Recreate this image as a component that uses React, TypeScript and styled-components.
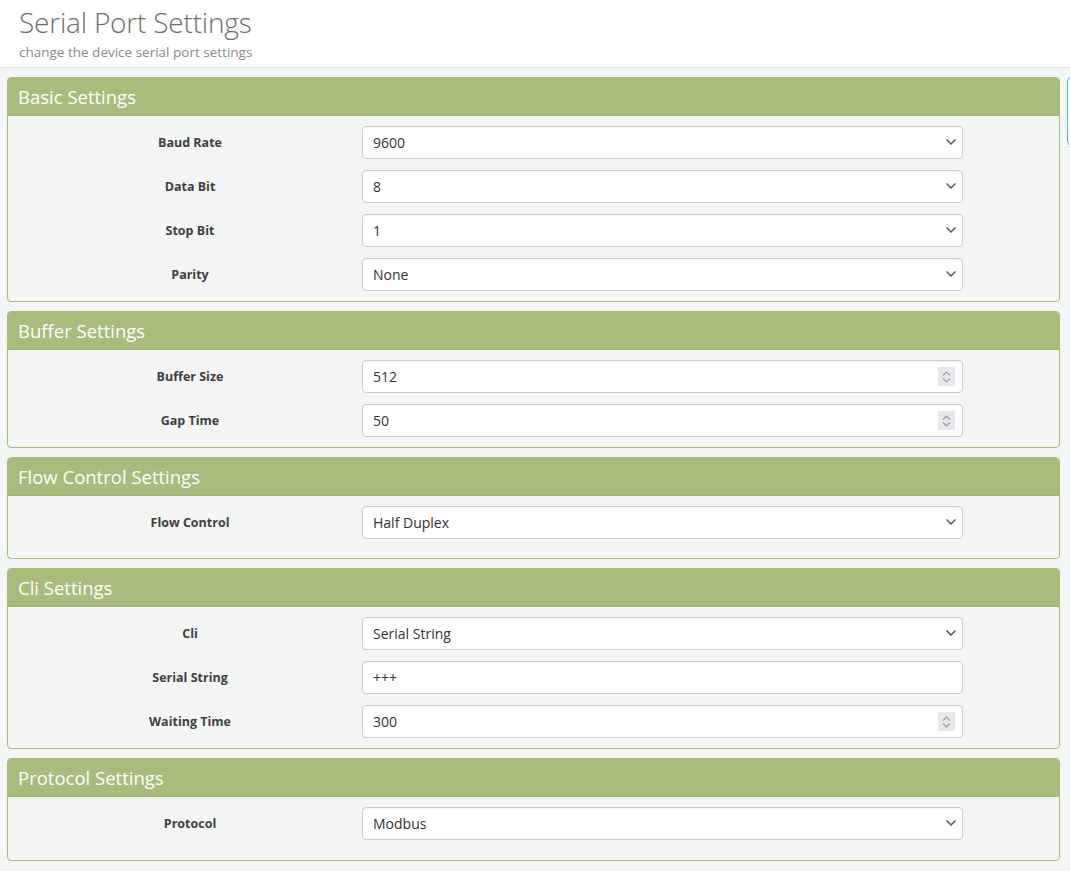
import React from "react";
import styled, { createGlobalStyle } from "styled-components";

const Global = createGlobalStyle`
  html, body { margin: 0; padding: 0; background: #f4f5f5; }
  body { font-family: "Open Sans", "Segoe UI", Arial, sans-serif; color: #333; }
  * { box-sizing: border-box; }
`;

const Page = styled.div`
  position: relative;
  width: 1070px;
  min-height: 871px;
  background: #f4f5f5;
  overflow: hidden;
`;

const TopBar = styled.header`
  background: #fff;
  height: 68px;
  border-bottom: 1px solid #ebebeb;
  padding: 3px 0 0 19px;
`;

const Title = styled.h1`
  margin: 0;
  font-weight: 300;
  font-size: 28px;
  line-height: 38px;
  color: #6f6f6f;
  letter-spacing: -0.2px;
`;

const Subtitle = styled.div`
  font-size: 13.5px;
  font-weight: 400;
  color: #8a8a8a;
  line-height: 18px;
  margin-top: 2px;
`;

const Content = styled.main`
  display: flex;
  flex-direction: column;
  gap: 9px;
  padding: 9px 10px 10px 7px;
`;

const Panel = styled.section`
  border: 1px solid #a8bc7a;
  border-radius: 4px;
  background: #f4f5f5;
  overflow: hidden;
`;

const PanelHeader = styled.div`
  background: #a8bc7b;
  height: 38px;
  border-bottom: 1px solid #9fb472;
  color: #fff;
  font-size: 18.5px;
  line-height: 37px;
  padding-left: 10px;
`;

const PanelBody = styled.div<{ $minH?: number }>`
  display: flex;
  flex-direction: column;
  gap: 11px;
  padding: 10px 0 10px 10px;
  min-height: ${(p) => (p.$minH ? `${p.$minH}px` : "auto")};
`;

const Row = styled.div`
  display: grid;
  grid-template-columns: 344px 601px;
  align-items: center;
  height: 33px;
`;

const Label = styled.label`
  text-align: center;
  font-weight: 700;
  font-size: 12.5px;
  color: #3f3f3f;
`;

const FieldWrap = styled.div`
  position: relative;
  height: 33px;
`;

const Field = styled.div`
  height: 33px;
  background: #fff;
  border: 1px solid #cccccc;
  border-radius: 4px;
  padding-left: 10px;
  font-size: 14px;
  line-height: 31px;
  color: #333;
  box-shadow: inset 0 1px 1px rgba(0, 0, 0, 0.04);
`;

const Chevron = styled.svg`
  position: absolute;
  right: 6px;
  top: 12px;
`;

const Spinner = styled.div`
  position: absolute;
  right: 8px;
  top: 7px;
  width: 17px;
  height: 19px;
  background: #e7e7ec;
  display: flex;
  flex-direction: column;
  align-items: center;
  justify-content: center;
  gap: 2px;
`;

const SideTab = styled.div`
  position: absolute;
  left: 1067px;
  top: 77px;
  width: 20px;
  height: 68px;
  border: 1px solid #5aaed0;
  border-radius: 4px;
  background: #fff;
`;

type Fld = { label: string; value: string; kind: "select" | "number" | "text" };

const Input: React.FC<{ f: Fld }> = ({ f }) => (
  <FieldWrap>
    <Field>{f.value}</Field>
    {f.kind === "select" && (
      <Chevron width="12" height="8" viewBox="0 0 12 8">
        <path d="M1.5 1.5 L6 6 L10.5 1.5" fill="none" stroke="#555" strokeWidth="1.5" />
      </Chevron>
    )}
    {f.kind === "number" && (
      <Spinner>
        <svg width="9" height="5" viewBox="0 0 9 5">
          <path d="M1 4.5 L4.5 1 L8 4.5" fill="none" stroke="#9a9aa5" strokeWidth="1.1" />
        </svg>
        <svg width="9" height="5" viewBox="0 0 9 5">
          <path d="M1 0.5 L4.5 4 L8 0.5" fill="none" stroke="#9a9aa5" strokeWidth="1.1" />
        </svg>
      </Spinner>
    )}
  </FieldWrap>
);

const sections: { title: string; minH?: number; fields: Fld[] }[] = [
  {
    title: "Basic Settings",
    fields: [
      { label: "Baud Rate", value: "9600", kind: "select" },
      { label: "Data Bit", value: "8", kind: "select" },
      { label: "Stop Bit", value: "1", kind: "select" },
      { label: "Parity", value: "None", kind: "select" },
    ],
  },
  {
    title: "Buffer Settings",
    fields: [
      { label: "Buffer Size", value: "512", kind: "number" },
      { label: "Gap Time", value: "50", kind: "number" },
    ],
  },
  {
    title: "Flow Control Settings",
    minH: 62,
    fields: [{ label: "Flow Control", value: "Half Duplex", kind: "select" }],
  },
  {
    title: "Cli Settings",
    fields: [
      { label: "Cli", value: "Serial String", kind: "select" },
      { label: "Serial String", value: "+++", kind: "text" },
      { label: "Waiting Time", value: "300", kind: "number" },
    ],
  },
  {
    title: "Protocol Settings",
    minH: 63,
    fields: [{ label: "Protocol", value: "Modbus", kind: "select" }],
  },
];

export default function App() {
  return (
    <Page>
      <Global />
      <TopBar>
        <Title>Serial Port Settings</Title>
        <Subtitle>change the device serial port settings</Subtitle>
      </TopBar>
      <Content>
        {sections.map((s) => (
          <Panel key={s.title}>
            <PanelHeader>{s.title}</PanelHeader>
            <PanelBody $minH={s.minH}>
              {s.fields.map((f) => (
                <Row key={f.label}>
                  <Label>{f.label}</Label>
                  <Input f={f} />
                </Row>
              ))}
            </PanelBody>
          </Panel>
        ))}
      </Content>
      <SideTab />
    </Page>
  );
}
